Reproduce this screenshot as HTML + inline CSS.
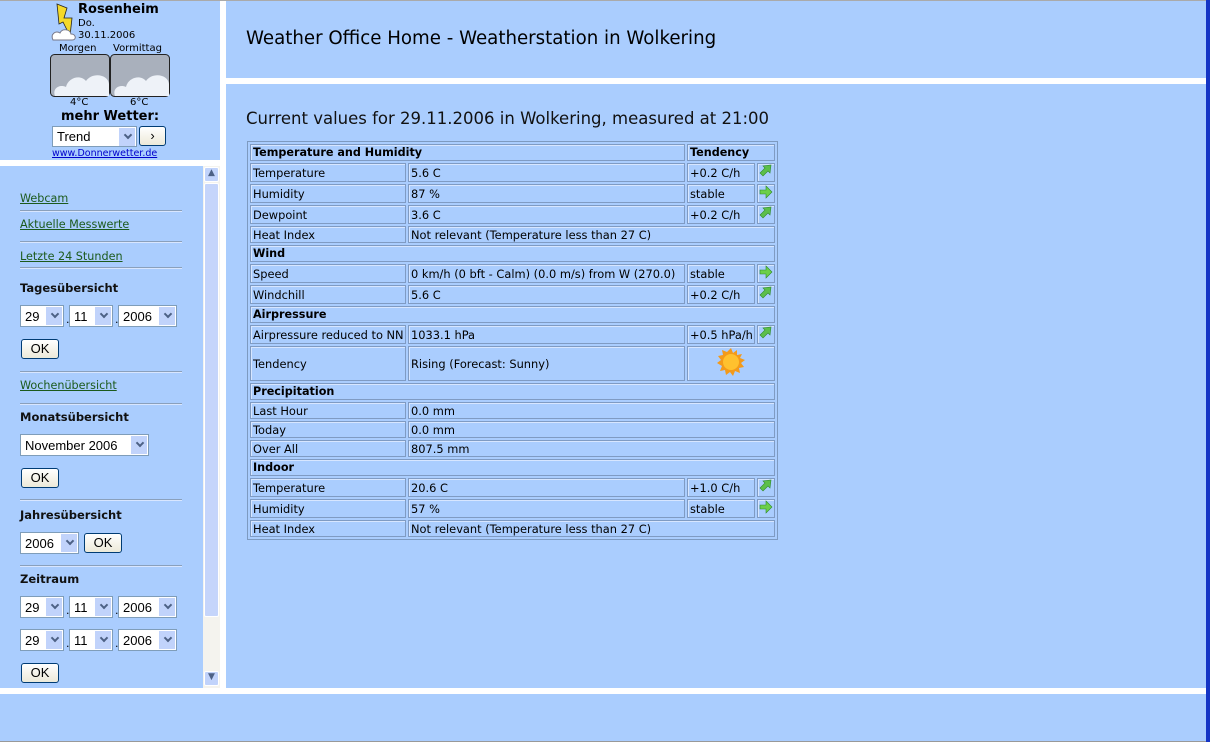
<!DOCTYPE html>
<html><head><meta charset="utf-8"><style>
*{margin:0;padding:0;box-sizing:border-box}
body{width:1210px;height:742px;position:relative;background:#fff;font-family:"DejaVu Sans",Verdana,sans-serif;overflow:hidden}
.p{position:absolute;background:#aacdfe}
.a{position:absolute}
a{color:#1c5a1c;text-decoration:underline;font-size:11.2px}
.h{font-weight:bold;font-size:11.5px;color:#111}
.hr{position:absolute;left:20px;width:162px;height:2px;background:#8aa0bc;border-bottom:1px solid #d8e6ff}
.sel{position:absolute;height:22px;background:#fff;border:1px solid #7f9db9;font-family:"Liberation Sans",Arial,sans-serif;font-size:13px;padding:3px 0 0 4px;color:#000}
.sel:after{content:"";position:absolute;right:1px;top:1px;width:16px;height:18px;background:#c1d3fb}
.sel i{position:absolute;right:5px;top:5px;width:6px;height:6px;border-right:2px solid #4d6185;border-bottom:2px solid #4d6185;transform:rotate(45deg);z-index:2}
.btn{position:absolute;height:20px;border:1px solid #003c74;border-radius:3px;background:linear-gradient(#fff,#ece9d8);font-family:"Liberation Sans",Arial,sans-serif;font-size:13px;text-align:center;line-height:18px}
.dot{position:absolute;font-size:11px}
table{position:absolute;left:247px;top:141px;width:529px;table-layout:fixed;border-collapse:separate;border-spacing:2px;border:1px solid #7d9ac0;font-size:11.4px;color:#000}
td{border:1px solid #7f9bc3;padding:0 2px;height:19px;white-space:nowrap;overflow:hidden;box-shadow:inset 1px 1px 0 #d7e6ff}
td.b{font-weight:bold;font-size:11.2px;height:17px}
tr.s td{height:17px}
td.ic{padding:0;text-align:center}
</style></head><body>
<div class="a" style="left:0;top:0;width:1210px;height:1px;background:#aaa"></div>
<div class="a" style="left:1206px;top:0;width:4px;height:742px;background:#1534c4"></div>
<div class="p" style="left:0;top:1px;width:220px;height:159px"></div>
<svg class="a" style="left:50px;top:2px" width="30" height="40" viewBox="0 0 30 40"><polygon points="7,2 17,6 14,16 22,16 20,34 13,20 9,22" fill="#f4d92a" stroke="#222" stroke-width="0.8"/><path d="M3,38 C0,32 6,28 10,31 C12,26 20,27 21,32 C26,32 27,38 22,38Z" fill="#fff" stroke="#778" stroke-width="1"/></svg>
<div class="a" style="left:78px;top:2px;font-weight:bold;font-size:13px">Rosenheim</div>
<div class="a" style="left:78px;top:18px;font-size:10px">Do.</div>
<div class="a" style="left:78px;top:30px;font-size:10px">30.11.2006</div>
<div class="a" style="left:59px;top:43px;font-size:10px">Morgen</div>
<div class="a" style="left:113px;top:43px;font-size:10px">Vormittag</div>
<svg class="a" style="left:50px;top:54px" width="121" height="44"><g><rect x="0.5" y="0.5" width="59" height="42" rx="4" fill="#a9b0bc" stroke="#222"/><path d="M5,42 C2,34 10,30 16,33 C18,24 30,20 36,27 C42,18 58,20 59,30 L59,42Z" fill="#eef2f8"/></g><g transform="translate(60,0)"><rect x="0.5" y="0.5" width="59" height="42" rx="4" fill="#a9b0bc" stroke="#222"/><path d="M5,42 C2,34 10,30 16,33 C18,24 30,20 36,27 C42,18 58,20 59,30 L59,42Z" fill="#eef2f8"/></g></svg>
<div class="a" style="left:70px;top:97px;font-size:10px">4°C</div>
<div class="a" style="left:130px;top:97px;font-size:10px">6°C</div>
<div class="a" style="left:61px;top:109px;font-weight:bold;font-size:13px">mehr Wetter:</div>
<div class="sel" style="left:52px;top:126px;width:85px;height:21px;font-size:13px;padding-top:2px">Trend<i></i></div>
<div class="btn" style="left:139px;top:126px;width:27px;height:20px">›</div>
<a class="a" style="left:52px;top:148px;color:#0000cc;font-size:9.5px">www.Donnerwetter.de</a>
<div class="p" style="left:0;top:166px;width:220px;height:522px"></div>
<div class="a" style="left:203px;top:166px;width:17px;height:522px;background:#f4f3ee"></div>
<div class="a" style="left:204px;top:167px;width:15px;height:15px;background:#c1d3fb;border:1px solid #fff;border-radius:2px;font-size:9px;text-align:center;color:#4d6185">▲</div>
<div class="a" style="left:204px;top:183px;width:15px;height:434px;background:#c5d5fb;border:1px solid #fff;border-radius:2px"></div>
<div class="a" style="left:204px;top:671px;width:15px;height:15px;background:#c1d3fb;border:1px solid #fff;border-radius:2px;font-size:9px;text-align:center;color:#4d6185">▼</div>
<a class="a" style="left:20px;top:192px">Webcam</a><div class="hr" style="top:210px"></div>
<a class="a" style="left:20px;top:218px">Aktuelle Messwerte</a><div class="hr" style="top:241px"></div>
<a class="a" style="left:20px;top:250px">Letzte 24 Stunden</a><div class="hr" style="top:267px"></div>
<div class="a h" style="left:20px;top:281px">Tagesübersicht</div>
<div class="sel" style="left:20px;top:305px;width:44px">29<i></i></div><div class="dot" style="left:66px;top:313px">.</div>
<div class="sel" style="left:69px;top:305px;width:44px">11<i></i></div><div class="dot" style="left:115px;top:313px">.</div>
<div class="sel" style="left:118px;top:305px;width:59px">2006<i></i></div>
<div class="btn" style="left:21px;top:339px;width:38px">OK</div>
<div class="hr" style="top:371px"></div>
<a class="a" style="left:20px;top:379px">Wochenübersicht</a><div class="hr" style="top:403px"></div>
<div class="a h" style="left:20px;top:410px">Monatsübersicht</div>
<div class="sel" style="left:20px;top:434px;width:129px">November 2006<i></i></div>
<div class="btn" style="left:21px;top:468px;width:38px">OK</div>
<div class="hr" style="top:499px"></div>
<div class="a h" style="left:20px;top:508px">Jahresübersicht</div>
<div class="sel" style="left:20px;top:532px;width:59px">2006<i></i></div>
<div class="btn" style="left:84px;top:533px;width:38px">OK</div>
<div class="hr" style="top:565px"></div>
<div class="a h" style="left:20px;top:572px">Zeitraum</div>
<div class="sel" style="left:20px;top:596px;width:44px">29<i></i></div><div class="dot" style="left:66px;top:604px">.</div>
<div class="sel" style="left:69px;top:596px;width:44px">11<i></i></div><div class="dot" style="left:115px;top:604px">.</div>
<div class="sel" style="left:118px;top:596px;width:59px">2006<i></i></div>
<div class="sel" style="left:20px;top:629px;width:44px">29<i></i></div><div class="dot" style="left:66px;top:637px">.</div>
<div class="sel" style="left:69px;top:629px;width:44px">11<i></i></div><div class="dot" style="left:115px;top:637px">.</div>
<div class="sel" style="left:118px;top:629px;width:59px">2006<i></i></div>
<div class="btn" style="left:21px;top:663px;width:38px">OK</div>
<div class="p" style="left:226px;top:1px;width:980px;height:77px"></div>
<div class="a" style="left:246px;top:28px;font-size:18.2px;color:#000">Weather Office Home - Weatherstation in Wolkering</div>
<div class="p" style="left:226px;top:84px;width:980px;height:604px"></div>
<div class="a" style="left:246px;top:109px;font-size:16.5px;color:#111">Current values for 29.11.2006 in Wolkering, measured at 21:00</div>
<svg width="0" height="0" style="position:absolute"><defs>
<symbol id="ur" viewBox="0 0 14 14"><path d="M1,9 L6,4 L4,2 L12,1 L11,9 L9,7 L4,12Z" fill="#5cbf4a" stroke="#2f8a2a" stroke-width="0.6"/></symbol>
<symbol id="rt" viewBox="0 0 14 14"><path d="M1,5 L7,5 L7,1 L13,7 L7,13 L7,9 L1,9Z" fill="#6ccf4a" stroke="#2f8a2a" stroke-width="0.6"/></symbol>
</defs></svg>
<table>
<colgroup><col style="width:156px"><col style="width:277px"><col style="width:68px"><col style="width:18px"></colgroup>
<tr><td class="b" colspan="2">Temperature and Humidity</td><td class="b" colspan="2">Tendency</td></tr>
<tr><td>Temperature</td><td>5.6 C</td><td>+0.2 C/h</td><td class="ic"><svg width="14" height="14"><use href="#ur"/></svg></td></tr>
<tr><td>Humidity</td><td>87 %</td><td>stable</td><td class="ic"><svg width="14" height="14"><use href="#rt"/></svg></td></tr>
<tr><td>Dewpoint</td><td>3.6 C</td><td>+0.2 C/h</td><td class="ic"><svg width="14" height="14"><use href="#ur"/></svg></td></tr>
<tr class="s"><td>Heat Index</td><td colspan="3">Not relevant (Temperature less than 27 C)</td></tr>
<tr><td class="b" colspan="4">Wind</td></tr>
<tr><td>Speed</td><td>0 km/h (0 bft - Calm) (0.0 m/s) from W (270.0)</td><td>stable</td><td class="ic"><svg width="14" height="14"><use href="#rt"/></svg></td></tr>
<tr><td>Windchill</td><td>5.6 C</td><td>+0.2 C/h</td><td class="ic"><svg width="14" height="14"><use href="#ur"/></svg></td></tr>
<tr><td class="b" colspan="4">Airpressure</td></tr>
<tr><td>Airpressure reduced to NN</td><td>1033.1 hPa</td><td>+0.5 hPa/h</td><td class="ic"><svg width="14" height="14"><use href="#ur"/></svg></td></tr>
<tr><td style="height:32px">Tendency</td><td>Rising (Forecast: Sunny)</td><td colspan="2" style="text-align:center;padding:0"><svg width="30" height="30" viewBox="0 0 30 30"><polygon points="15,1 17,6 21,3 21,8 26,7 24,11 29,13 25,16 28,20 23,21 24,26 19,24 17,29 14,25 10,28 9,23 4,24 6,19 1,16 5,13 2,9 7,8 6,3 11,5" fill="#f39a1a"/><circle cx="15" cy="15" r="8" fill="#ffc12e"/></svg></td></tr>
<tr><td class="b" colspan="4">Precipitation</td></tr>
<tr class="s"><td>Last Hour</td><td colspan="3">0.0 mm</td></tr>
<tr class="s"><td>Today</td><td colspan="3">0.0 mm</td></tr>
<tr class="s"><td>Over All</td><td colspan="3">807.5 mm</td></tr>
<tr><td class="b" colspan="4">Indoor</td></tr>
<tr><td>Temperature</td><td>20.6 C</td><td>+1.0 C/h</td><td class="ic"><svg width="14" height="14"><use href="#ur"/></svg></td></tr>
<tr><td>Humidity</td><td>57 %</td><td>stable</td><td class="ic"><svg width="14" height="14"><use href="#rt"/></svg></td></tr>
<tr class="s"><td>Heat Index</td><td colspan="3">Not relevant (Temperature less than 27 C)</td></tr>
</table>
<div class="p" style="left:0;top:694px;width:1206px;height:47px"></div>
<div class="a" style="left:0;top:741px;width:1206px;height:1px;background:#999"></div>
</body></html>
